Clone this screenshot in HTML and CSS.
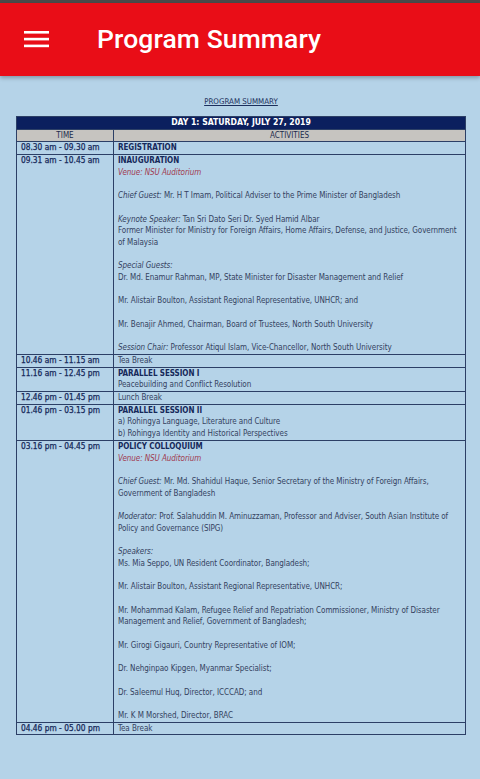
FILE: index.html
```html
<!DOCTYPE html>
<html lang="en">
<head>
<meta charset="utf-8">
<title>Program Summary</title>
<link rel="stylesheet" href="styles.css">
</head>
<body>
<div class="status"></div>
<header class="appbar">
  <svg class="menu" width="25" height="17" viewBox="0 0 25 17" aria-hidden="true">
    <rect x="0" y="0" width="25" height="2.6" fill="#fff"/>
    <rect x="0" y="6.8" width="25" height="2.6" fill="#fff"/>
    <rect x="0" y="13.6" width="25" height="2.6" fill="#fff"/>
  </svg>
  <h1 class="appbar-title">Program Summary</h1>
</header>
<main class="content">
  <h2 class="doc-title">PROGRAM SUMMARY</h2>
  <table class="schedule">
    <colgroup><col class="c-time"><col class="c-act"></colgroup>
    <thead>
      <tr><th colspan="2" class="day">DAY 1: SATURDAY, JULY 27, 2019</th></tr>
      <tr class="cols"><th>TIME</th><th>ACTIVITIES</th></tr>
    </thead>
    <tbody>
      <tr><td class="time">08.30 am - 09.30 am</td><td class="act"><div class="head">REGISTRATION</div></td></tr>
      <tr><td class="time">09.31 am - 10.45 am</td><td class="act">
        <div class="head">INAUGURATION</div>
        <div class="venue">Venue: NSU Auditorium</div>
        <p><em>Chief Guest:</em> Mr. H T Imam, Political Adviser to the Prime Minister of Bangladesh</p>
        <p><em>Keynote Speaker:</em> Tan Sri Dato Seri Dr. Syed Hamid Albar<br>Former Minister for Ministry for Foreign Affairs, Home Affairs, Defense, and Justice, Government of Malaysia</p>
        <p><em>Special Guests:</em><br>Dr. Md. Enamur Rahman, MP, State Minister for Disaster Management and Relief</p>
        <p>Mr. Alistair Boulton, Assistant Regional Representative, UNHCR; and</p>
        <p>Mr. Benajir Ahmed, Chairman, Board of Trustees, North South University</p>
        <p><em>Session Chair:</em> Professor Atiqul Islam, Vice-Chancellor, North South University</p>
      </td></tr>
      <tr><td class="time">10.46 am - 11.15 am</td><td class="act">Tea Break</td></tr>
      <tr><td class="time">11.16 am - 12.45 pm</td><td class="act">
        <div class="head">PARALLEL SESSION I</div>
        <div>Peacebuilding and Conflict Resolution</div>
      </td></tr>
      <tr><td class="time">12.46 pm - 01.45 pm</td><td class="act">Lunch Break</td></tr>
      <tr><td class="time">01.46 pm - 03.15 pm</td><td class="act">
        <div class="head">PARALLEL SESSION II</div>
        <div>a) Rohingya Language, Literature and Culture</div>
        <div>b) Rohingya Identity and Historical Perspectives</div>
      </td></tr>
      <tr><td class="time">03.16 pm - 04.45 pm</td><td class="act">
        <div class="head">POLICY COLLOQUIUM</div>
        <div class="venue">Venue: NSU Auditorium</div>
        <p><em>Chief Guest:</em> Mr. Md. Shahidul Haque, Senior Secretary of the Ministry of Foreign Affairs, Government of Bangladesh</p>
        <p><em>Moderator:</em> Prof. Salahuddin M. Aminuzzaman, Professor and Adviser, South Asian Institute of Policy and Governance (SIPG)</p>
        <p><em>Speakers:</em><br>Ms. Mia Seppo, UN Resident Coordinator, Bangladesh;</p>
        <p>Mr. Alistair Boulton, Assistant Regional Representative, UNHCR;</p>
        <p>Mr. Mohammad Kalam, Refugee Relief and Repatriation Commissioner, Ministry of Disaster Management and Relief, Government of Bangladesh;</p>
        <p>Mr. Girogi Gigauri, Country Representative of IOM;</p>
        <p>Dr. Nehginpao Kipgen, Myanmar Specialist;</p>
        <p>Dr. Saleemul Huq, Director, ICCCAD; and</p>
        <p>Mr. K M Morshed, Director, BRAC</p>
      </td></tr>
      <tr><td class="time">04.46 pm - 05.00 pm</td><td class="act">Tea Break</td></tr>
    </tbody>
  </table>
</main>
</body>
</html>
```
FILE: styles.css
```css
html, body {
  margin: 0;
  padding: 0;
}
body {
  background: #b5d3e8;
  font-family: "DejaVu Sans Condensed", "Liberation Sans", sans-serif;
  color: #34425f;
}
.status {
  height: 3px;
  background: #4a4a4a;
}
.appbar {
  height: 73px;
  background: #e90d17;
  display: flex;
  align-items: center;
  padding-left: 24px;
  gap: 48px;
  box-shadow: 0 2px 4px rgba(0, 0, 0, 0.28);
}
.menu {
  display: block;
  margin-top: 0;
}
.appbar-title {
  margin: -3px 0 0;
  font-family: Roboto, "Liberation Sans", sans-serif;
  font-weight: 500;
  font-size: 26.5px;
  color: #fff;
  letter-spacing: 0.1px;
}
.content {
  margin: 0 14px 0 16px;
  padding-top: 20px;
}
.doc-title {
  margin: 0 0 9px;
  text-align: center;
  font-size: 7.9px;
  line-height: 11px;
  font-weight: normal;
  color: #1c2f5c;
  text-decoration: underline;
  text-underline-offset: 1px;
}
.schedule {
  width: 450px;
  table-layout: fixed;
  border-collapse: collapse;
  font-size: 8px;
  line-height: 11.7px;
}
.c-time {
  width: 97px;
}
.schedule th, .schedule td {
  border: 1px solid #2c3f66;
  padding: 0 4px;
  vertical-align: top;
}
.schedule th {
  font-weight: normal;
  text-align: center;
}
.day {
  background: #0b1f5e;
  color: #fff;
  font-size: 8.6px;
  font-weight: bold !important;
}
.cols th {
  background: #c6c4c0;
  color: #1d2c4d;
}
.time {
  color: #15295a;
  white-space: nowrap;
  font-size: 8.3px;
  -webkit-text-stroke: 0.25px #15295a;
}
.schedule td.act {
  color: #34425f;
  padding-right: 2px;
  letter-spacing: -0.06px;
}
.head {
  color: #15295a;
  font-weight: bold;
}
.venue {
  color: #a03a4f;
  font-style: italic;
}
.act p {
  margin: 11.7px 0 0;
}
.act em {
  font-style: italic;
}
```
